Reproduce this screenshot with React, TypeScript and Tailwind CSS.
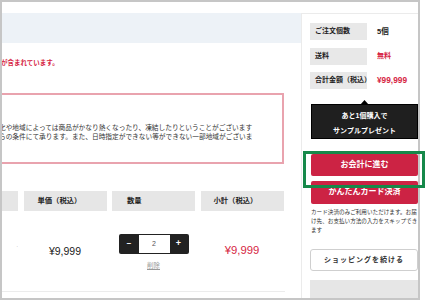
// App.tsx
import React from 'react';

const App: React.FC = () => {
  return (
    <div className="w-[425px] h-[300px] bg-white relative overflow-hidden font-['Liberation_Sans','Noto_Sans_CJK_JP',sans-serif]">
      <div className="w-[420px] h-[300px] border-2 border-[#c6c6c6] overflow-hidden flex">
        {/* main column */}
        <div className="w-[299px] shrink-0 flex flex-col">
          <div className="mt-[11px] h-[30px] bg-[#edf2f7]" />
          <p className="mt-[15px] ml-[-1px] text-[6.5px] leading-[9px] font-bold text-[#d61f44] whitespace-nowrap">が含まれています。</p>

          <div className="mt-[26px] ml-[-30px] w-[312px] h-[71px] border-2 border-[#e9a3ae] pl-[25px] pt-[28px] text-[6.7px] leading-[9px] text-[#333] whitespace-nowrap">
            <p>化や地域によっては商品がかなり熱くなったり、凍結したりということがございます</p>
            <p>らの条件にて承ります。また、日時指定ができない等ができない一部地域がございま</p>
          </div>

          <div className="mt-[27px] ml-[-67px] w-[350px]">
            <div className="flex gap-[5.5px] h-[20px]">
              <div className="w-[83px] bg-[#e6e6e6]" />
              <div className="w-[83px] bg-[#e6e6e6] pl-[14px] flex items-center text-[7.3px] font-bold text-[#222]">単価（税込）</div>
              <div className="w-[83px] bg-[#e6e6e6] pl-[15px] flex items-center text-[7.3px] font-bold text-[#222]">数量</div>
              <div className="w-[83px] bg-[#e6e6e6] pl-[13px] flex items-center text-[7.3px] font-bold text-[#222]">小計（税込）</div>
            </div>
            <div className="flex gap-[5.5px] h-[81px] border-b border-[#ececec]">
              <div className="w-[83px] flex justify-end pt-[31px]">
                <span className="text-[5px] leading-[6px] text-[#999]">.</span>
              </div>
              <div className="w-[83px] flex justify-center pt-[34px]">
                <span className="text-[10.5px] leading-[12px] text-[#222]">¥9,999</span>
              </div>
              <div className="w-[83px] flex flex-col items-center pt-[23px]">
                <div className="flex h-[20px] rounded-[2px] overflow-hidden bg-[#222] p-[1px]">
                  <button className="w-[19px] text-white text-[8px] font-bold flex items-center justify-center">−</button>
                  <div className="w-[31px] bg-white flex items-center justify-center text-[7px] text-[#555]">2</div>
                  <button className="w-[18px] text-white text-[9px] font-bold flex items-center justify-center">+</button>
                </div>
                <span className="mt-[8px] text-[6.5px] leading-[8px] text-[#999] underline">削除</span>
              </div>
              <div className="w-[83px] flex justify-center pt-[33px]">
                <span className="text-[11.3px] leading-[13px] text-[#d61f44]">¥9,999</span>
              </div>
            </div>
          </div>
        </div>

        {/* side panel */}
        <div className="w-[117px] shrink-0 mt-[11px] border-l border-t border-[#ebebeb] pl-[8px] pt-[9px] flex flex-col">
          <div className="flex flex-col gap-[7.5px]">
            <div className="flex items-center h-[17px]">
              <div className="w-[57px] h-full bg-[#e8e8e8] pl-[5px] flex items-center text-[7px] font-bold text-[#222] whitespace-nowrap">ご注文個数</div>
              <span className="ml-[10px] text-[7.5px] font-bold text-[#222]">5個</span>
            </div>
            <div className="flex items-center h-[17px]">
              <div className="w-[57px] h-full bg-[#e8e8e8] pl-[5px] flex items-center text-[7px] font-bold text-[#222] whitespace-nowrap">送料</div>
              <span className="ml-[10px] text-[7px] font-bold text-[#d61f44]">無料</span>
            </div>
            <div className="flex items-center h-[17px]">
              <div className="w-[57px] h-full bg-[#e8e8e8] pl-[5px] flex items-center text-[7px] font-bold text-[#222] whitespace-nowrap">合計金額（税込）</div>
              <span className="ml-[10px] text-[8.3px] font-bold text-[#d61f44]">¥99,999</span>
            </div>
          </div>

          <div className="relative mt-[15px] ml-[1px] h-[38px] pt-[3px] bg-[#1f1f1f] border border-black flex flex-col items-center justify-center text-white text-[7px] font-bold leading-[15px]">
            <svg className="absolute left-[48px] top-[-5px]" width="9" height="5" viewBox="0 0 9 5">
              <polygon points="0,5 4.5,0 9,5" fill="#000" />
            </svg>
            <span>あと1個購入で</span>
            <span>サンプルプレゼント</span>
          </div>

          <button className="mt-[15px] ml-[1px] h-[25px] rounded-[2px] bg-[#cc2344] text-white text-[8px] font-bold">お会計に進む</button>
          <button className="mt-[5px] ml-[1px] h-[25px] rounded-[2px] bg-[#cc2344] text-white text-[8px] font-bold">かんたんカード決済</button>

          <p className="mt-[4.5px] ml-[1px] text-[5.6px] leading-[9px] text-[#333] whitespace-nowrap">
            カード決済のみご利用いただけます。お届<br />
            け先、お支払い方法の入力をスキップでき<br />
            ます
          </p>

          <button className="mt-[13.5px] h-[25px] rounded-[3px] border border-[#cfcfcf] bg-white text-[7px] font-bold tracking-[1px] text-[#333]">
            ショッピングを続ける
          </button>

          <div className="mt-[9px] h-[20px] bg-[#e6e6e6]" />
        </div>
      </div>

      {/* highlight frame */}
      <div className="absolute left-[303px] top-[151px] w-[122px] h-[37px] border-[3px] border-[#16894a]" />
    </div>
  );
};

export default App;
